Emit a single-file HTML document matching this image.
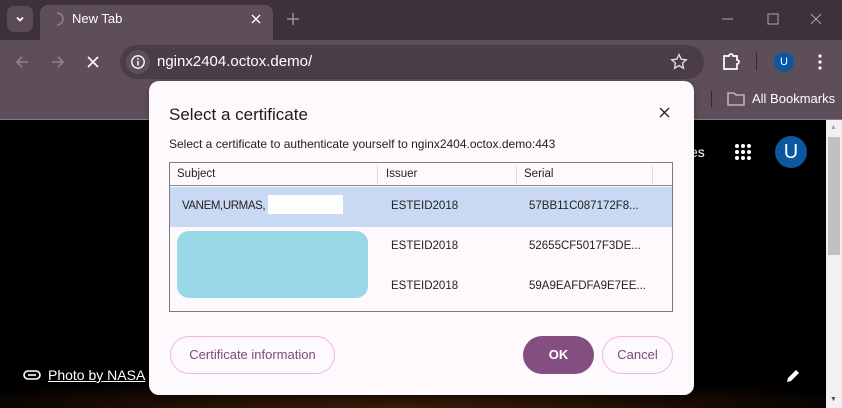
<!DOCTYPE html>
<html><head><meta charset="utf-8"><style>
*{margin:0;padding:0;box-sizing:border-box}
body{width:842px;height:408px;overflow:hidden;font-family:"Liberation Sans",sans-serif;background:#000;position:relative}
.abs{position:absolute}
.t{font-size:11.5px;color:#222}
</style></head><body>
<div class="abs" style="left:0;top:0;width:842px;height:40px;background:#3d3239"></div>
<div class="abs" style="left:7px;top:6px;width:26px;height:26px;border-radius:7px;background:#5a4a55"></div>
<svg class="abs" style="left:14px;top:13px" width="12" height="12"><path d="M3 4.5l3 3 3-3" stroke="#fff" stroke-width="1.8" fill="none"/></svg>
<div class="abs" style="left:40px;top:5px;width:233px;height:40px;border-radius:8px 8px 0 0;background:#5e4e59"></div>
<svg class="abs" style="left:49px;top:11px" width="16" height="16"><path d="M8 2a6 6 0 0 1 0 12" stroke="#8a7a85" stroke-width="1.8" fill="none"/></svg>
<div class="abs" style="left:72px;top:11px;color:#fff;font-size:13px">New Tab</div>
<svg class="abs" style="left:251px;top:14px" width="10" height="10"><path d="M1 1l8 8M9 1l-8 8" stroke="#fff" stroke-width="1.4"/></svg>
<svg class="abs" style="left:286px;top:12px" width="14" height="14"><path d="M7 1v12M1 7h12" stroke="#9c8f98" stroke-width="1.5"/></svg>
<svg class="abs" style="left:720px;top:12px" width="110" height="14"><path d="M2 7h11" stroke="#aaa" stroke-width="1"/><rect x="48" y="2" width="10" height="10" fill="none" stroke="#aaa"/><path d="M91 2l10 10M101 2l-10 10" stroke="#aaa"/></svg>
<div class="abs" style="left:0;top:40px;width:842px;height:80px;background:#5e4e59"></div>
<svg class="abs" style="left:14px;top:54px" width="90" height="16"><path d="M14 8H3M8 3L3 8l5 5" stroke="#8f8189" stroke-width="1.6" fill="none"/><path d="M38 8h11M44 3l5 5-5 5" stroke="#8f8189" stroke-width="1.6" fill="none"/><path d="M74 3l10 10M84 3l-10 10" stroke="#fff" stroke-width="1.6"/></svg>
<div class="abs" style="left:120px;top:45px;height:34px;border-radius:17px;background:#4a3d46;width:584px"></div>
<div class="abs" style="left:126px;top:50px;width:24px;height:24px;border-radius:12px;background:#5e4e59"></div>
<svg class="abs" style="left:130px;top:54px" width="16" height="16"><circle cx="8" cy="8" r="6.2" fill="none" stroke="#fff" stroke-width="1.4"/><path d="M8 7v4.5" stroke="#fff" stroke-width="1.5"/><circle cx="8" cy="5" r="0.9" fill="#fff"/></svg>
<div class="abs" style="left:157px;top:53px;color:#fff;font-size:15px">nginx2404.octox.demo/</div>
<svg class="abs" style="left:670px;top:53px" width="18" height="18"><path d="M9 1.5l2.2 4.7 5 .6-3.7 3.4 1 5-4.5-2.6-4.5 2.6 1-5L1.8 6.8l5-.6z" fill="none" stroke="#ddd" stroke-width="1.4"/></svg>
<svg class="abs" style="left:721px;top:52px" width="20" height="20"><path d="M3 4h5a2 2 0 0 1 4 0h4v4a2 2 0 0 1 0 4v5H3z" fill="none" stroke="#fff" stroke-width="1.7"/></svg>
<div class="abs" style="left:756px;top:52px;width:1px;height:18px;background:#332a30"></div>
<div class="abs" style="left:774px;top:52px;width:20px;height:20px;border-radius:10px;background:#0b57a0;color:#fff;font-size:11px;text-align:center;line-height:20px">U</div>
<svg class="abs" style="left:816px;top:53px" width="8" height="18"><circle cx="4" cy="3" r="1.6" fill="#fff"/><circle cx="4" cy="9" r="1.6" fill="#fff"/><circle cx="4" cy="15" r="1.6" fill="#fff"/></svg>
<div class="abs" style="left:711px;top:91px;width:1px;height:16px;background:#332a30"></div>
<svg class="abs" style="left:727px;top:91px" width="18" height="15"><path d="M1 2h6l2 2h8v10H1z" fill="none" stroke="#ccc" stroke-width="1.3"/></svg>
<div class="abs" style="left:752px;top:91px;color:#fff;font-size:13px">All Bookmarks</div>
<div class="abs" style="left:0;top:119px;width:842px;height:1px;background:#8a7c85"></div>
<div class="abs" style="left:0;top:360px;width:826px;height:48px;background:radial-gradient(ellipse 500px 30px at 400px 48px,#3a1c08,#000)"></div>
<div class="abs" style="left:826px;top:120px;width:16px;height:288px;background:#f1f1f1"></div>
<div class="abs" style="left:828px;top:137px;width:12px;height:118px;background:#c1c1c1"></div>
<div class="abs" style="left:830px;top:124px;color:#a3a3a3;font-size:7px">▲</div>
<div class="abs" style="left:830px;top:396px;color:#505050;font-size:7px">▼</div>
<div class="abs" style="left:690px;top:144px;color:#fff;font-size:14px">es</div>
<svg class="abs" style="left:734px;top:143px" width="18" height="18"><g fill="#fff"><circle cx="3" cy="3" r="2"/><circle cx="9" cy="3" r="2"/><circle cx="15" cy="3" r="2"/><circle cx="3" cy="9" r="2"/><circle cx="9" cy="9" r="2"/><circle cx="15" cy="9" r="2"/><circle cx="3" cy="15" r="2"/><circle cx="9" cy="15" r="2"/><circle cx="15" cy="15" r="2"/></g></svg>
<div class="abs" style="left:775px;top:136px;width:32px;height:32px;border-radius:16px;background:#0b57a0;color:#fff;font-size:20px;text-align:center;line-height:32px">U</div>
<svg class="abs" style="left:23px;top:369px" width="18" height="12"><rect x="1" y="2" width="16" height="8" rx="4" fill="none" stroke="#fff" stroke-width="1.6"/><path d="M5 6h8" stroke="#fff" stroke-width="1.6"/></svg>
<div class="abs" style="left:48px;top:367px;color:#fff;font-size:14px;text-decoration:underline">Photo by NASA</div>
<svg class="abs" style="left:785px;top:368px" width="16" height="16"><path d="M2 14l1-4 8-8 3 3-8 8z" fill="#fff"/></svg>
<div class="abs" style="left:149px;top:81px;width:545px;height:314px;border-radius:10px;background:#fef9fc;box-shadow:0 2px 6px rgba(0,0,0,.3)"></div>
<div class="abs" style="left:169px;top:105px;color:#1f1a1d;font-size:17px">Select a certificate</div>
<svg class="abs" style="left:659px;top:107px" width="11" height="11"><path d="M1 1l9 9M10 1l-9 9" stroke="#222" stroke-width="1.3"/></svg>
<div class="abs" style="left:169px;top:137px;color:#222;font-size:12px">Select a certificate to authenticate yourself to nginx2404.octox.demo:443</div>
<div class="abs" style="left:169px;top:162px;width:504px;height:150px;border:1px solid #807a7e;background:#fef9fc"></div>
<div class="abs" style="left:170px;top:163px;width:502px;height:23px;border-bottom:1px solid #888"></div>
<div class="abs" style="left:377px;top:165px;width:1px;height:19px;background:#ddd"></div>
<div class="abs" style="left:516px;top:165px;width:1px;height:19px;background:#ddd"></div>
<div class="abs" style="left:652px;top:165px;width:1px;height:19px;background:#ddd"></div>
<div class="abs t" style="left:177px;top:168px">Subject</div>
<div class="abs t" style="left:386px;top:168px">Issuer</div>
<div class="abs t" style="left:524px;top:168px">Serial</div>
<div class="abs" style="left:170px;top:187px;width:502px;height:40px;background:#c9d9f3"></div>
<div class="abs t" style="left:182px;top:200px;letter-spacing:-0.4px">VANEM,URMAS,</div>
<div class="abs" style="left:268px;top:195px;width:75px;height:19px;background:#fff"></div>
<div class="abs" style="left:177px;top:231px;width:191px;height:67px;border-radius:12px;background:#9ad8e8"></div>
<div class="abs t" style="left:391px;top:200px">ESTEID2018</div>
<div class="abs t" style="left:391px;top:240px">ESTEID2018</div>
<div class="abs t" style="left:391px;top:280px">ESTEID2018</div>
<div class="abs t" style="left:529px;top:200px">57BB11C087172F8...</div>
<div class="abs t" style="left:529px;top:240px">52655CF5017F3DE...</div>
<div class="abs t" style="left:529px;top:280px">59A9EAFDFA9E7EE...</div>
<div class="abs" style="left:170px;top:336px;width:165px;height:38px;border:1px solid #f0b6e8;border-radius:19px;color:#7a4b78;font-size:13px;text-align:center;line-height:36px">Certificate information</div>
<div class="abs" style="left:523px;top:336px;width:71px;height:38px;border-radius:19px;background:#844f80;color:#fff;font-size:13px;font-weight:bold;text-align:center;line-height:38px">OK</div>
<div class="abs" style="left:602px;top:336px;width:71px;height:38px;border:1px solid #f0b6e8;border-radius:19px;color:#7a4b78;font-size:13px;text-align:center;line-height:36px">Cancel</div>
</body></html>
